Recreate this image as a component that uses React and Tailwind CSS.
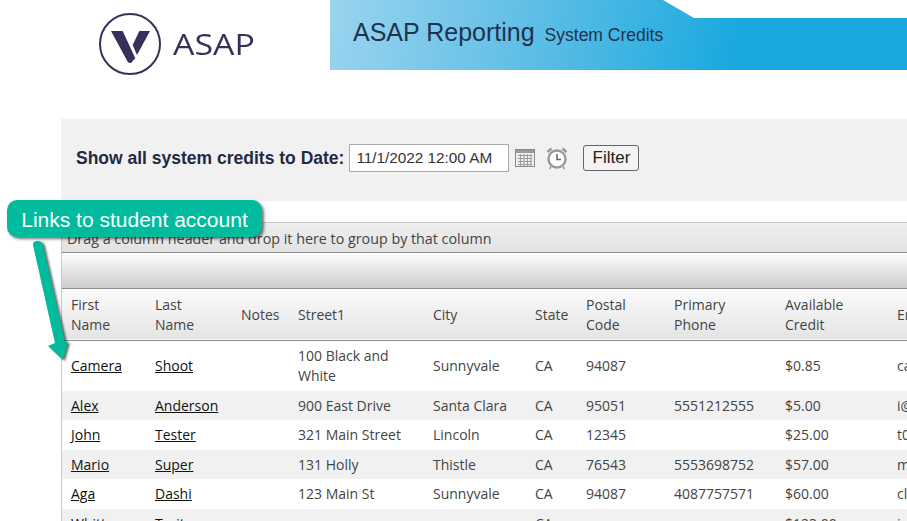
const rows = [
  { f: "Camera", l: "Shoot", s: <>100 Black and<br />White</>, c: "Sunnyvale", st: "CA", z: "94087", p: "", a: "$0.85", e: "ca", h: "h-[51px]" },
  { f: "Alex", l: "Anderson", s: "900 East Drive", c: "Santa Clara", st: "CA", z: "95051", p: "5551212555", a: "$5.00", e: "i@", h: "h-[29px]" },
  { f: "John", l: "Tester", s: "321 Main Street", c: "Lincoln", st: "CA", z: "12345", p: "", a: "$25.00", e: "t0", h: "h-[30px]" },
  { f: "Mario", l: "Super", s: "131 Holly", c: "Thistle", st: "CA", z: "76543", p: "5553698752", a: "$57.00", e: "m", h: "h-[29px]" },
  { f: "Aga", l: "Dashi", s: "123 Main St", c: "Sunnyvale", st: "CA", z: "94087", p: "4087757571", a: "$60.00", e: "cl", h: "h-[30px]" },
  { f: "Whitt", l: "Trait", s: "", c: "", st: "CA", z: "", p: "", a: "$123.00", e: "j", h: "h-[30px]" },
];
const cols = [84, 86, 57, 135, 102, 51, 88, 111, 112, 60];
const heads = [<>First<br />Name</>, <>Last<br />Name</>, "Notes", "Street1", "City", "State", <>Postal<br />Code</>, <>Primary<br />Phone</>, <>Available<br />Credit</>, "Email"];

export default function App() {
  return (
    <div className="relative h-[521px] w-[907px] overflow-hidden bg-white font-['Liberation_Sans',sans-serif]">
      <header className="flex h-[70px]">
        <div className="flex w-[330px] items-start pl-[99px] pt-[12px]">
          <svg width="64" height="64" viewBox="0 0 64 64" className="shrink-0">
            <circle cx="31" cy="32" r="30" fill="none" stroke="#37305a" strokeWidth="2" />
            <path d="M12 19 H23.7 L36.3 46.3 L32 51 Q30 51.5 28.7 49.7 Z" fill="#37305a" />
            <path d="M40.3 19 H51 L38 43 L33.7 33 Z" fill="#37305a" />
          </svg>
          <span className="ml-[10px] mt-[15px] origin-left scale-x-[1.17] font-['Open_Sans',sans-serif] text-[29px] leading-[34px] text-[#37305a]">ASAP</span>
        </div>
        <div className="flex h-[70px] flex-1 items-start bg-[linear-gradient(100deg,#9ad4ef_0%,#5fbee6_35%,#1aa9df_70%,#1aa9df_100%)] pl-[23px] pt-[16px] [clip-path:polygon(0_0,333px_0,364px_18px,100%_18px,100%_100%,0_100%)]">
          <span className="text-[25px] leading-[32px] text-[#1f3350]">ASAP Reporting</span>
          <span className="ml-[10px] mt-[9px] text-[17.5px] leading-[20px] text-[#1f3350]">System Credits</span>
        </div>
      </header>

      <section className="ml-[61px] mt-[49px] flex h-[82px] items-center bg-[#f1f1f1] pb-[4px] pl-[15px]">
        <span className="text-[17.5px] font-bold text-[#1f2a44]">Show all system credits to Date:</span>
        <div className="ml-[5px] flex h-[28px] w-[160px] items-center border border-[#aaa] bg-white pl-[6px] text-[15.3px] text-[#333]">11/1/2022 12:00 AM</div>
        <svg width="20" height="20" viewBox="0 0 20 20" className="ml-[6px]">
          <rect x="0.5" y="1.5" width="19" height="17" fill="#eee" stroke="#8a8a8a" />
          <rect x="1" y="2" width="18" height="3" fill="#9a9a9a" />
          <path d="M3 7.5H17M3 10.5H17M3 13.5H17M3 16.5H17M5.5 6V18M9 6V18M12.5 6V18M16 6V18" stroke="#9c9c9c" strokeWidth="1" fill="none" />
        </svg>
        <svg width="24" height="24" viewBox="0 0 24 24" className="ml-[10px]">
          <circle cx="12" cy="13" r="8.5" fill="#fff" stroke="#999" strokeWidth="2.4" />
          <path d="M12 8V13.5H16" stroke="#666" strokeWidth="1.5" fill="none" />
          <path d="M2.5 6L6.5 2.5M21.5 6L17.5 2.5" stroke="#999" strokeWidth="2.4" />
          <path d="M6 20.5L4.5 23M18 20.5L19.5 23" stroke="#999" strokeWidth="1.5" />
        </svg>
        <button className="ml-[14px] h-[26px] w-[56px] rounded-[3px] border border-[#666] bg-[#f3f3f3] text-[17px] leading-[22px] text-[#222]">Filter</button>
      </section>

      <section className="ml-[61px] mt-[21px] w-[846px] overflow-hidden border-l border-[#c8c8c8] font-['Open_Sans',sans-serif] text-[14px] leading-[20px] text-[#444]">
        <div className="flex h-[31px] items-center border-y border-t-[#c8c8c8] border-b-[#8c8c8c] bg-[linear-gradient(#efefef,#e2e2e2)] pl-[5px] pt-[2px] text-[14.3px] text-[#444]">
          Drag a column header and drop it here to group by that column
        </div>
        <div className="mt-px h-[35px] border-y border-t-white border-b-[#8c8c8c] bg-[linear-gradient(#fbfbfb,#cdcdcd)]" />
        <table className="w-[886px] table-fixed border-collapse">
          <colgroup>
            {cols.map((w, i) => <col key={i} style={{ width: w }} />)}
          </colgroup>
          <thead>
            <tr className="h-[51px] border-b border-[#8c8c8c] bg-[linear-gradient(#fbfbfb,#e4e4e4)]">
              {heads.map((h, i) => <th key={i} className="pl-[9px] pt-[2px] text-left font-normal">{h}</th>)}
            </tr>
          </thead>
          <tbody>
            {rows.map((r, i) => (
              <tr key={i} className={`${r.h} ${i % 2 ? "bg-[#f1f1f1]" : "bg-white"}`}>
                <td className="pl-[9px]"><a href="#" className="text-[#111] underline">{r.f}</a></td>
                <td className="pl-[9px]"><a href="#" className="text-[#111] underline">{r.l}</a></td>
                <td />
                <td className="pl-[9px]">{r.s}</td>
                <td className="pl-[9px]">{r.c}</td>
                <td className="pl-[9px]">{r.st}</td>
                <td className="pl-[9px]">{r.z}</td>
                <td className="pl-[9px]">{r.p}</td>
                <td className="pl-[9px]">{r.a}</td>
                <td className="pl-[9px]">{r.e}</td>
              </tr>
            ))}
          </tbody>
        </table>
      </section>

      <div className="absolute left-[7px] top-[200px] flex h-[37px] w-[255px] items-center justify-center rounded-[10px] bg-[#00bb9e] pt-[2px] text-[21px] text-white shadow-[2px_2px_3px_rgba(0,0,0,0.55)]">
        Links to student account
      </div>
      <svg className="absolute left-0 top-0 drop-shadow-[2px_1px_1px_rgba(0,0,0,0.6)]" width="90" height="380" viewBox="0 0 90 380">
        <path d="M33 245 Q33 241 37 241 Q42 241 43 245 L65 342 L68 342 L63 360 L48 346 L55 343 Z" fill="#00bb9e" />
      </svg>
    </div>
  );
}
